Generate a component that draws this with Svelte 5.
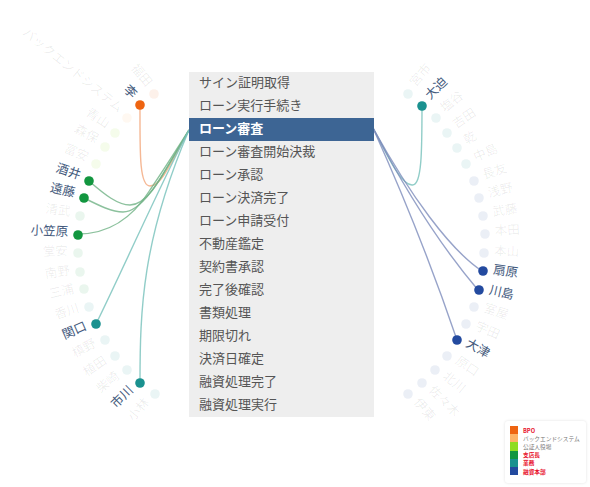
<script>
  const rows = [
    'サイン証明取得', 'ローン実行手続き', 'ローン審査', 'ローン審査開始決裁', 'ローン承認',
    'ローン決済完了', 'ローン申請受付', '不動産鑑定', '契約書承認', '完了後確認',
    '書類処理', '期限切れ', '決済日確定', '融資処理完了', '融資処理実行'
  ];
  const selected = 'ローン審査';

  const legend = [
    { color: '#ee6411', label: 'BPO', red: true },
    { color: '#fdb366', label: 'バックエンドシステム' },
    { color: '#8fdc20', label: '公証人役場' },
    { color: '#12963f', label: '支店長', red: true },
    { color: '#1a918f', label: '業務', red: true },
    { color: '#234a9f', label: '融資本部', red: true }
  ];

  const colors = {
    bpo: '#ee6411', back: '#fdb366', notary: '#8fdc20',
    branch: '#12963f', ops: '#1a918f', hq: '#234a9f'
  };

  const cx = 281;
  const cy = 244;

  // x, y, name, group, linked
  const nodes = [
    [154, 94, '福田', 'bpo'],
    [140, 105, '李', 'bpo', true],
    [127, 118, 'バックエンドシステム', 'back'],
    [115, 133, '青山', 'notary'],
    [105, 147, '森保', 'notary'],
    [96, 164, '富安', 'notary'],
    [89, 181, '酒井', 'branch', true],
    [84, 198, '遠藤', 'branch', true],
    [80, 216, '清武', 'branch'],
    [78, 235, '小笠原', 'branch', true],
    [78, 253, '堂安', 'branch'],
    [80, 272, '南野', 'branch'],
    [84, 289, '三浦', 'branch'],
    [89, 307, '香川', 'ops'],
    [96, 324, '関口', 'ops', true],
    [105, 340, '槙野', 'ops'],
    [115, 356, '植田', 'ops'],
    [127, 370, '柴崎', 'ops'],
    [140, 383, '市川', 'ops', true],
    [155, 394, '小林', 'ops'],
    [408, 94, '宮市', 'ops'],
    [422, 106, '大迫', 'ops', true],
    [436, 118, '塩谷', 'ops'],
    [447, 133, '吉田', 'ops'],
    [457, 148, '乾', 'ops'],
    [466, 164, '中島', 'ops'],
    [474, 181, '長友', 'hq'],
    [479, 198, '浅野', 'hq'],
    [483, 216, '武藤', 'hq'],
    [485, 234, '本田', 'hq'],
    [484, 253, '本山', 'hq'],
    [483, 271, '扇原', 'hq', true],
    [479, 290, '川島', 'hq', true],
    [474, 307, '室屋', 'hq'],
    [466, 324, '宇田', 'hq'],
    [457, 340, '大津', 'hq', true],
    [447, 356, '原口', 'hq'],
    [435, 370, '北川', 'hq'],
    [422, 383, '佐々木', 'hq'],
    [408, 394, '伊東', 'hq']
  ].map(([x, y, name, group, linked]) => {
    const deg = (Math.atan2(y - cy, x - cx) * 180) / Math.PI;
    const left = x < cx;
    const len = Math.hypot(x - cx, y - cy);
    const lx = cx + ((x - cx) * (len + 10)) / len;
    const ly = cy + ((y - cy) * (len + 10)) / len;
    return {
      x, y, name, linked, lx, ly, left,
      color: colors[group],
      rotate: left ? deg + 180 : deg
    };
  });

  const links = [
    { d: 'M140 105 C140 150 139 186 150 186 C161 186 170 165 189 130', color: '#f3a67a' },
    { d: 'M89 181 C105 195 118 205 130 205 C150 205 165 170 189 130', color: '#6fb285' },
    { d: 'M84 198 C100 206 112 212 123 212 C145 212 165 170 189 130', color: '#6fb285' },
    { d: 'M78 234 C105 234 130 222 150 190 C165 168 175 152 189 130', color: '#6fb285' },
    { d: 'M96 324 C125 265 160 185 189 130', color: '#75c0ba' },
    { d: 'M140 383 C140 310 142 240 189 130', color: '#75c0ba' },
    { d: 'M422 105 C422 150 422 186 412 185 C400 185 385 150 373 128', color: '#75c0ba' },
    { d: 'M482 271 C450 250 410 195 373 128', color: '#7d8cbc' },
    { d: 'M478 290 C440 245 405 190 373 128', color: '#7d8cbc' },
    { d: 'M457 340 C440 290 410 210 373 128', color: '#7d8cbc' }
  ];
</script>

<div class="stage">
  <svg class="chart" width="590" height="487" viewBox="0 0 590 487">
    {#each links as link}
      <path d={link.d} stroke={link.color} />
    {/each}
    {#each nodes as n}
      <circle cx={n.x} cy={n.y} r="4.8" fill={n.color} opacity={n.linked ? 1 : 0.09} />
      <text
        class:linked={n.linked}
        x={n.lx}
        y={n.ly}
        dy="-4"
        text-anchor={n.left ? 'end' : 'start'}
        dominant-baseline="central"
        transform="rotate({n.rotate} {n.lx} {n.ly})">{n.name}</text>
    {/each}
  </svg>

  <ul class="menu">
    {#each rows as row}
      <li class:active={row === selected}>{row}</li>
    {/each}
  </ul>

  <div class="legend">
    {#each legend as item}
      <div class="legend-item">
        <span class="swatch" style:background={item.color}></span>
        <span class:red={item.red}>{item.label}</span>
      </div>
    {/each}
  </div>
</div>

<style>
  :global(body) {
    margin: 0;
    background: #fff;
  }

  .stage {
    position: relative;
    width: 590px;
    height: 487px;
    overflow: hidden;
    display: flex;
    align-items: flex-start;
    font-family: "Noto Sans CJK JP", "Liberation Sans", sans-serif;
  }

  .chart {
    position: absolute;
    inset: 0;
  }

  .chart path {
    fill: none;
    stroke-width: 1.4;
    stroke-opacity: 0.8;
  }

  .chart text {
    font-size: 12.5px;
    fill: #000;
    fill-opacity: 0.08;
  }

  .chart text.linked {
    fill: #445a7d;
    fill-opacity: 1;
  }

  .menu {
    position: relative;
    list-style: none;
    margin: 72px 0 0 189px;
    padding: 0;
    width: 185px;
    background: #eee;
  }

  .menu li {
    height: 23px;
    line-height: 20px;
    padding-left: 10px;
    font-size: 13px;
    color: #555;
  }

  .menu li.active {
    background: #3d6594;
    color: #fff;
    font-weight: 700;
  }

  .legend {
    position: relative;
    margin: 421px 0 0 131px;
    width: 81px;
    height: 62px;
    box-sizing: border-box;
    padding: 5px 0 0 5px;
    border-radius: 3px;
    box-shadow: 0 0 3px rgba(0, 0, 0, 0.12);
    background: #fff;
  }

  .legend-item {
    display: flex;
    align-items: center;
    gap: 5px;
    height: 8.2px;
    font-size: 5.7px;
    color: #777;
    white-space: nowrap;
  }

  .swatch {
    width: 8px;
    height: 100%;
    flex: none;
  }

  .red {
    color: #e8112d;
    font-weight: 700;
  }
</style>
